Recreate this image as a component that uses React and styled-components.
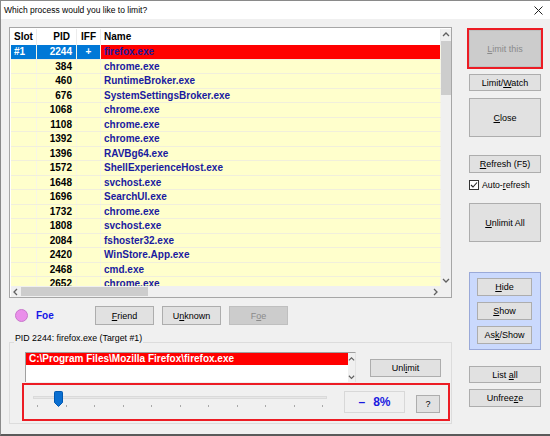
import React from 'react'
import styled, { createGlobalStyle } from 'styled-components'

const rows = [
  ['384', 'chrome.exe'],
  ['460', 'RuntimeBroker.exe'],
  ['676', 'SystemSettingsBroker.exe'],
  ['1068', 'chrome.exe'],
  ['1108', 'chrome.exe'],
  ['1392', 'chrome.exe'],
  ['1396', 'RAVBg64.exe'],
  ['1572', 'ShellExperienceHost.exe'],
  ['1648', 'svchost.exe'],
  ['1696', 'SearchUI.exe'],
  ['1732', 'chrome.exe'],
  ['1808', 'svchost.exe'],
  ['2084', 'fshoster32.exe'],
  ['2420', 'WinStore.App.exe'],
  ['2468', 'cmd.exe'],
  ['2652', 'chrome.exe'],
]

const ticks = [0, 1, 2, 3, 4, 5, 6, 7, 8, 9, 10]

function Chevron({ dir }) {
  const pts = {
    up: '1,5 4,2 7,5',
    down: '1,2 4,5 7,2',
    left: '5,1 2,4 5,7',
    right: '2,1 5,4 2,7',
  }[dir]
  return (
    <svg width="8" height="8" viewBox="0 0 8 8">
      <polyline points={pts} fill="none" stroke="#606060" strokeWidth="1.3" />
    </svg>
  )
}

export default function App() {
  return (
    <>
      <GlobalStyle />
      <Window>
        <TitleBar>
          <span>Which process would you like to limit?</span>
          <svg width="9" height="9" viewBox="0 0 9 9">
            <path d="M0.5 0.5L8.5 8.5M8.5 0.5L0.5 8.5" stroke="#222" strokeWidth="1" />
          </svg>
        </TitleBar>
        <Body>
          <LeftCol>
            <ListBox>
              <TableArea>
                <HeadRow>
                  <HeadCell $w={26}>Slot</HeadCell>
                  <HeadCell $w={40} $align="right">PID</HeadCell>
                  <HeadCell $w={24} $align="center">IFF</HeadCell>
                  <HeadCell $grow>Name</HeadCell>
                </HeadRow>
                <Row>
                  <Cell $w={26} $bg="#0078d7" $color="#fff">#1</Cell>
                  <Cell $w={40} $align="right" $bg="#0078d7" $color="#fff">2244</Cell>
                  <Cell $w={24} $align="center" $bg="#0078d7" $color="#fff">+</Cell>
                  <Cell $grow $bg="#ff0000" $color="#1a1aa0">firefox.exe</Cell>
                </Row>
                {rows.map(([pid, name]) => (
                  <Row key={pid}>
                    <Cell $w={26} />
                    <Cell $w={40} $align="right">{pid}</Cell>
                    <Cell $w={24} />
                    <Cell $grow $color="#1a1aa0">{name}</Cell>
                  </Row>
                ))}
              </TableArea>
              <VScroll>
                <ArrowBox><Chevron dir="up" /></ArrowBox>
                <VThumb />
                <VSpace />
                <ArrowBox><Chevron dir="down" /></ArrowBox>
              </VScroll>
              <HScroll>
                <ArrowBox><Chevron dir="left" /></ArrowBox>
                <HThumb />
                <HSpace />
                <ArrowBox><Chevron dir="right" /></ArrowBox>
              </HScroll>
              <Corner />
            </ListBox>

            <FoeRow>
              <Dot />
              <FoeLabel>Foe</FoeLabel>
              <Button $w={59} $h={19}><Key>F</Key>riend</Button>
              <Button $w={59} $h={19}>U<Key>n</Key>known</Button>
              <Button $w={59} $h={19} disabled>F<Key>o</Key>e</Button>
            </FoeRow>

            <Group>
              <Legend>PID 2244: firefox.exe (Target #1)</Legend>
              <PathRow>
                <PathBox>
                  <PathLines>
                    <PathBar>C:\Program Files\Mozilla Firefox\firefox.exe</PathBar>
                  </PathLines>
                  <PathScroll>
                    <Chevron dir="up" />
                    <Chevron dir="down" />
                  </PathScroll>
                </PathBox>
                <Button $w={71} $h={18} $mt={7} $ml={14}>Unl<Key>i</Key>mit</Button>
              </PathRow>
              <SliderFrame>
                <SliderArea>
                  <Track />
                  <TickRow>
                    {ticks.map(t => <Tick key={t} />)}
                  </TickRow>
                  <Thumb width="9" height="16" viewBox="0 0 9 16">
                    <path d="M0.5 1.5Q0.5 0.5 1.5 0.5H7.5Q8.5 0.5 8.5 1.5V11.5L4.5 15.5L0.5 11.5Z" fill="#0a6fd1" stroke="#0058b0" />
                  </Thumb>
                </SliderArea>
                <Readout><span>–</span><span>8%</span></Readout>
                <Button $w={24} $h={18} $mt={10} $ml={11}>?</Button>
              </SliderFrame>
            </Group>
          </LeftCol>

          <RightCol>
            <Highlight>
              <Button $w={72} $h={37} disabled><Key>L</Key>imit this</Button>
            </Highlight>
            <Button $mt={5} $h={17}>Limit/<Key>W</Key>atch</Button>
            <Button $mt={7} $h={39}><Key>C</Key>lose</Button>
            <Button $mt={18} $h={18}><Key>R</Key>efresh (F5)</Button>
            <CheckRow>
              <CheckBox>
                <svg width="8" height="8" viewBox="0 0 8 8">
                  <polyline points="1,4 3,6 7,1.5" fill="none" stroke="#222" strokeWidth="1.1" />
                </svg>
              </CheckBox>
              <span>Auto-<Key>r</Key>efresh</span>
            </CheckRow>
            <Button $mt={13} $h={39}><Key>U</Key>nlimit All</Button>
            <BluePanel>
              <Button $w={55} $h={18}><Key>H</Key>ide</Button>
              <Button $w={55} $h={18}><Key>S</Key>how</Button>
              <Button $w={55} $h={18}>As<Key>k</Key>/Show</Button>
            </BluePanel>
            <Button $mt={16} $h={17}>List <Key>a</Key>ll</Button>
            <Button $mt={6} $h={18}>Unfree<Key>z</Key>e</Button>
          </RightCol>
        </Body>
      </Window>
    </>
  )
}

const GlobalStyle = createGlobalStyle`
  html, body { margin: 0; padding: 0; background: #f0f0f0; }
  * { box-sizing: border-box; }
`

const Window = styled.div`
  width: 550px;
  height: 436px;
  background: #f0f0f0;
  border-top: 1px solid #8a8a8a;
  border-left: 1px solid #8a8a8a;
  border-bottom: 2px solid #5a5a5a;
  font-family: 'Liberation Sans', Arial, sans-serif;
  overflow: hidden;
`

const TitleBar = styled.div`
  height: 18px;
  background: #fff;
  display: flex;
  align-items: center;
  justify-content: space-between;
  padding: 0 7px 0 3px;
  font-size: 8.5px;
  color: #000;
`

const Body = styled.div`
  display: flex;
  gap: 17px;
  padding: 8px 0 0 8px;
`

const LeftCol = styled.div`
  width: 443px;
  display: flex;
  flex-direction: column;
`

const ListBox = styled.div`
  width: 443px;
  height: 271px;
  border: 1px solid #a6a6a6;
  padding: 1px;
  background: #fff;
  display: grid;
  grid-template-columns: 430px 10px;
  grid-template-rows: 257px 11px;
`

const TableArea = styled.div`
  overflow: hidden;
  background: #ffffcc;
  font-size: 10px;
  font-weight: bold;
`

const HeadRow = styled.div`
  display: flex;
  height: 16px;
  background: #fff;
  color: #000;
`

const HeadCell = styled.div`
  width: ${p => (p.$grow ? 'auto' : `${p.$w}px`)};
  flex: ${p => (p.$grow ? 1 : 'none')};
  text-align: ${p => p.$align || 'left'};
  padding: 0 ${p => (p.$align === 'right' ? 6 : 3)}px 0 3px;
  line-height: 16px;
  border-right: 1px solid #ececec;
  white-space: nowrap;
`

const Row = styled.div`
  display: flex;
  height: 14.5px;
  border-bottom: 1px solid #f1efdc;
  background: #ffffcc;
`

const Cell = styled.div`
  width: ${p => (p.$grow ? 'auto' : `${p.$w}px`)};
  flex: ${p => (p.$grow ? 1 : 'none')};
  text-align: ${p => p.$align || 'left'};
  padding: 0 ${p => (p.$align === 'right' ? 4 : 3)}px 0 3px;
  line-height: 14px;
  background: ${p => p.$bg || 'transparent'};
  color: ${p => p.$color || '#000'};
  border-right: 1px solid #f7f6e6;
  white-space: nowrap;
`

const VScroll = styled.div`
  background: #f0f0f0;
  display: flex;
  flex-direction: column;
`

const ArrowBox = styled.div`
  width: 10px;
  height: 11px;
  flex: none;
  display: flex;
  align-items: center;
  justify-content: center;
`

const VThumb = styled.div`
  height: 54px;
  margin-top: 1px;
  background: #cdcdcd;
`

const VSpace = styled.div`
  flex: 1;
`

const HScroll = styled.div`
  background: #f0f0f0;
  display: flex;
  align-items: stretch;
`

const HThumb = styled.div`
  width: 127px;
  margin: 1px 0;
  background: #cdcdcd;
`

const HSpace = styled.div`
  flex: 1;
`

const Corner = styled.div`
  background: #f0f0f0;
`

const FoeRow = styled.div`
  display: flex;
  align-items: center;
  height: 19px;
  margin-top: 8px;
  gap: 8px;
`

const Dot = styled.div`
  width: 13px;
  height: 13px;
  margin-left: 6px;
  border-radius: 50%;
  background: #ea8fea;
  border: 1px solid #c878cc;
`

const FoeLabel = styled.div`
  width: 51px;
  color: #1515e6;
  font-weight: bold;
  font-size: 10px;
`

const Button = styled.button`
  display: block;
  flex: none;
  width: ${p => p.$w || 72}px;
  height: ${p => p.$h || 17}px;
  margin: ${p => p.$mt || 0}px 0 0 ${p => p.$ml || 0}px;
  padding: 0;
  background: ${p => (p.disabled ? '#cccccc' : '#e1e1e1')};
  border: 1px solid ${p => (p.disabled ? '#bfbfbf' : '#adadad')};
  color: ${p => (p.disabled ? '#8a8a8a' : '#000')};
  font-family: 'Liberation Sans', Arial, sans-serif;
  font-size: 9px;
  text-align: center;
  white-space: nowrap;
`

const Key = styled.span`
  text-decoration: underline;
`

const Group = styled.fieldset`
  margin: 7.5px 0 0 0;
  padding: 0.5px 0 2px 0;
  border: 1px solid #dcdcdc;
  width: 443px;
  min-width: 0;
`

const Legend = styled.legend`
  padding: 0 1px 8px;
  margin-left: 4px;
  font-size: 8.8px;
  line-height: 11px;
  color: #000;
`

const PathRow = styled.div`
  display: flex;
  align-items: flex-start;
  margin-left: 15px;
`

const PathBox = styled.div`
  width: 331px;
  height: 30px;
  border: 1px solid #a0a0a0;
  border-right-color: #e3e3e3;
  border-bottom: none;
  background: #fff;
  display: flex;
`

const PathLines = styled.div`
  flex: 1;
`

const PathBar = styled.div`
  height: 12px;
  background: #ff0000;
  color: #fff;
  font-weight: bold;
  font-size: 10px;
  line-height: 12px;
  padding-left: 3px;
  white-space: nowrap;
`

const PathScroll = styled.div`
  width: 7px;
  background: #f0f0f0;
  display: flex;
  flex-direction: column;
  justify-content: space-between;
  align-items: center;
  padding: 3px 0 1px;
  svg { width: 7px; height: 7px; }
`

const SliderFrame = styled.div`
  width: 428px;
  height: 38px;
  margin: 1px 0 0 12px;
  border: 2px solid #ec1c24;
  display: flex;
  align-items: flex-start;
`

const SliderArea = styled.div`
  position: relative;
  width: 294px;
  margin-left: 9px;
  display: flex;
  flex-direction: column;
`

const Track = styled.div`
  height: 3px;
  margin-top: 11px;
  background: #e7e7e7;
  border: 1px solid #dadada;
`

const TickRow = styled.div`
  display: flex;
  justify-content: space-between;
  padding: 0 4px 0 4px;
  margin-top: 6px;
`

const Tick = styled.div`
  width: 1px;
  height: 2px;
  background: #a8a8a8;
`

const Thumb = styled.svg`
  position: absolute;
  left: 21px;
  top: 6px;
`

const Readout = styled.div`
  width: 61px;
  height: 22px;
  margin: 6px 0 0 17px;
  border: 1px solid #d8d8d8;
  display: flex;
  align-items: center;
  justify-content: center;
  gap: 8px;
  color: #1a1ae0;
  font-weight: bold;
  font-size: 12px;
`

const RightCol = styled.div`
  width: 72px;
  display: flex;
  flex-direction: column;
  padding-top: 1px;
`

const Highlight = styled.div`
  width: 76px;
  height: 41px;
  margin-left: -2px;
  border: 2px solid #ec1c24;
`

const CheckRow = styled.div`
  display: flex;
  align-items: center;
  gap: 3px;
  height: 11px;
  margin-top: 6px;
  font-size: 8.7px;
`

const CheckBox = styled.div`
  width: 10px;
  height: 10px;
  border: 1px solid #333;
  background: #fff;
  display: flex;
  align-items: center;
  justify-content: center;
`

const BluePanel = styled.div`
  margin-top: 30px;
  height: 78px;
  width: 72px;
  background: #cad9fd;
  border: 1px solid #9aa9d8;
  padding: 5px 0 0 7px;
  display: flex;
  flex-direction: column;
  gap: 6px;
`
